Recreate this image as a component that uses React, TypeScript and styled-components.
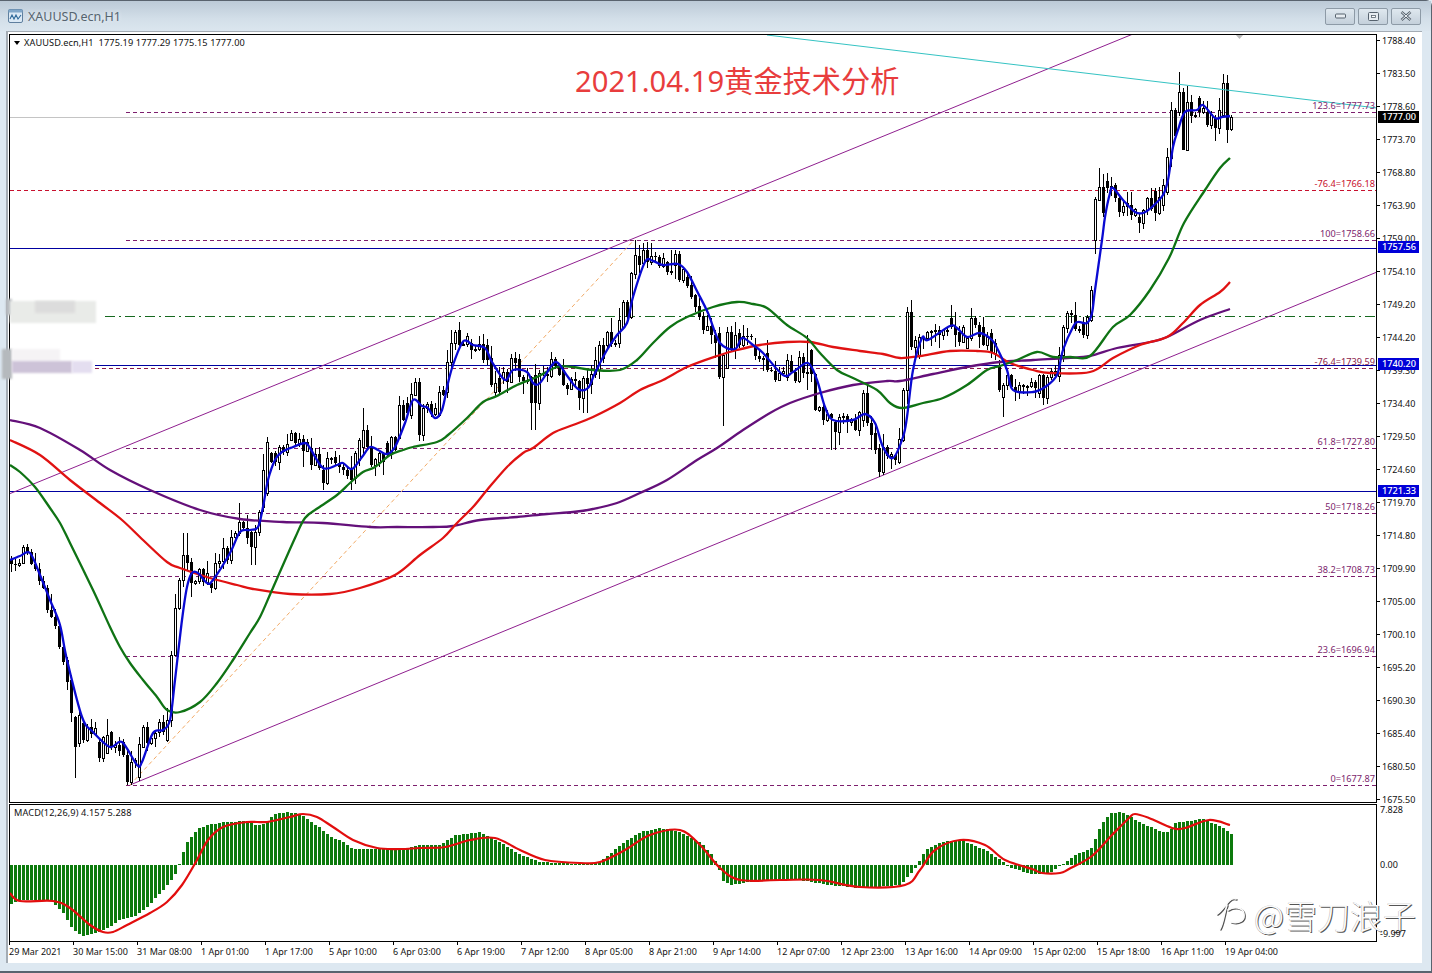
import React from "react";
import styled, { createGlobalStyle } from "styled-components";

type Pt = [number, number];

const BLUE: Pt[] = [[10,560],[20,556],[30,553],[40,575],[50,600],[60,625],[67,660],[82,717],[93,732],[110,747],[122,742],[137,765],[142,762],[153,733],[163,730],[170,720],[175,680],[182,620],[187,587],[192,573],[198,573],[207,583],[213,580],[230,553],[240,532],[250,530],[258,527],[263,507],[268,480],[275,460],[282,452],[293,447],[305,443],[310,448],[323,468],[337,465],[343,463],[352,469],[362,457],[370,447],[378,450],[387,454],[395,447],[405,423],[413,400],[422,406],[428,408],[435,418],[442,410],[448,383],[453,365],[462,343],[467,341],[473,345],[485,348],[492,362],[505,380],[513,370],[527,372],[533,383],[540,383],[552,365],[558,363],[568,377],[578,389],[588,388],[595,373],[607,350],[617,335],[627,323],[633,297],[645,262],[653,261],[663,265],[678,264],[687,272],[698,293],[708,313],[720,343],[735,349],[742,338],[753,345],[763,353],[783,375],[793,372],[808,363],[817,380],[825,407],[833,420],[853,420],[865,414],[875,423],[883,447],[893,458],[903,437],[907,417],[913,370],[922,338],[928,340],[950,326],[957,328],[967,337],[980,333],[992,340],[998,350],[1007,370],[1013,390],[1033,392],[1045,387],[1057,375],[1063,350],[1073,327],[1078,322],[1087,323],[1092,313],[1095,290],[1102,240],[1105,217],[1110,193],[1113,188],[1123,200],[1135,212],[1143,213],[1152,207],[1163,195],[1168,180],[1173,147],[1178,130],[1185,112],[1197,110],[1203,105],[1215,118],[1222,117],[1230,116]];
const GREEN: Pt[] = [[10,465],[20,472],[35,487],[50,508],[60,523],[70,543],[93,590],[110,627],[120,647],[130,663],[143,680],[157,697],[167,710],[180,712],[200,702],[217,683],[233,660],[250,633],[260,617],[272,590],[295,538],[305,518],[318,508],[337,495],[350,483],[363,472],[375,467],[390,455],[403,450],[413,447],[437,442],[448,435],[467,418],[483,402],[497,396],[517,385],[537,377],[557,367],[573,367],[593,370],[620,370],[637,360],[653,343],[670,327],[687,317],[713,307],[737,302],[753,304],[767,308],[787,325],[807,338],[820,353],[837,370],[853,378],[877,390],[890,403],[902,408],[923,403],[943,398],[967,385],[987,370],[1000,366],[1017,360],[1037,352],[1053,357],[1070,357],[1090,356],[1113,327],[1130,315],[1150,290],[1169,258],[1184,223],[1205,190],[1220,168],[1230,158]];
const RED: Pt[] = [[10,440],[40,455],[70,480],[100,503],[122,520],[143,540],[167,562],[180,568],[210,578],[237,585],[253,589],[290,594],[330,594],[360,588],[395,575],[420,555],[443,538],[457,523],[473,507],[487,490],[507,467],[523,453],[533,448],[553,433],[573,425],[593,417],[620,403],[640,390],[663,380],[687,367],[717,356],[737,350],[760,345],[787,342],[810,342],[833,347],[860,351],[883,354],[900,358],[920,356],[950,351],[977,351],[993,353],[1010,363],[1033,370],[1050,373],[1090,372],[1113,358],[1140,345],[1167,337],[1183,323],[1200,305],[1220,292],[1230,282]];
const PURPLE: Pt[] = [[10,420],[40,428],[80,450],[110,470],[150,490],[200,510],[240,519],[283,522],[323,523],[370,527],[397,527],[433,527],[453,526],[480,520],[517,517],[547,514],[573,512],[593,509],[617,503],[640,493],[667,480],[697,460],[717,448],[743,430],[770,413],[790,403],[820,393],[853,385],[887,381],[900,381],[933,374],[967,367],[1000,362],[1033,360],[1067,358],[1090,356],[1117,348],[1150,342],[1167,337],[1200,320],[1230,309]];
const HIST: Pt[] = [[10,904],[20,900],[50,900],[63,913],[73,930],[82,936],[97,933],[110,927],[118,920],[133,917],[147,907],[160,893],[173,878],[178,867],[182,854],[187,842],[197,829],[207,825],[223,822],[247,821],[257,826],[267,822],[273,814],[287,812],[300,814],[310,821],[320,828],[330,837],[343,842],[353,849],[400,849],[420,845],[440,845],[455,835],[480,832],[500,842],[520,855],[540,862],[580,864],[600,862],[620,845],[640,832],[660,828],[680,832],[700,842],[712,855],[718,866],[722,880],[730,885],[760,880],[800,880],[830,885],[860,888],[900,885],[915,868],[925,850],[940,842],[960,840],[985,850],[1000,860],[1010,868],[1032,874],[1049,873],[1059,866],[1065,863],[1074,855],[1092,848],[1097,833],[1102,823],[1110,813],[1122,812],[1132,818],[1145,825],[1162,832],[1169,832],[1175,823],[1189,821],[1202,818],[1212,823],[1224,828],[1230,834]];
const SIGNAL: Pt[] = [[10,893],[20,901],[53,901],[70,908],[90,925],[103,932],[113,932],[127,925],[150,913],[167,902],[182,885],[197,860],[208,840],[223,827],[247,822],[267,822],[290,817],[303,814],[317,817],[333,827],[353,840],[377,848],[400,849],[420,848],[445,847],[470,840],[495,838],[520,850],[545,860],[580,863],[600,862],[625,850],[650,835],[680,830],[700,845],[720,868],[740,880],[780,880],[820,880],[860,887],[905,885],[920,870],[935,850],[960,840],[985,845],[1005,860],[1032,869],[1042,873],[1060,873],[1069,869],[1092,856],[1112,835],[1129,818],[1135,814],[1149,818],[1172,828],[1185,828],[1209,820],[1230,825]];

const HIGHS: Record<number, number> = {185:533,240:503,266:437,290:430,362:408,417:378,451:330,515:352,612:318,634:240,673:250,735:322,808:335,862:390,908:307,950:305,972:308,1072:310,1100:168,1178:72,1224:74};
const LOWS: Record<number, number> = {74:778,130:785,253:565,322:490,352:490,533:430,585:413,722:426,833:450,884:475,1003:417,1043:405,1140:233,1185:150,1228:143};

// notable bodies read from the reference: x, top, bottom, 1 = white / 0 = black
const BODIES: [number, number, number, number][] = [
  [63,647,662,0],[66,660,682,0],[70,680,713,0],[75,717,747,0],[78,715,743,1],[83,723,740,0],[98,742,758,0],[107,735,753,1],[111,732,747,0],[122,742,755,0],[127,755,782,0],[138,744,777,1],[142,727,747,1],[147,727,743,0],[158,722,732,1],[162,722,732,0],[167,720,740,1],[171,655,720,1],[175,608,655,1],[178,580,608,1],[182,555,580,1],[187,555,563,0],[191,562,583,0],[210,583,588,0],[214,563,588,1],[227,548,560,0],[231,537,560,1],[238,522,533,1],[250,532,547,0],
  [263,470,507,1],[266,442,493,1],[273,453,462,0],[278,447,462,1],[291,433,440,1],[310,448,465,0],[323,470,483,0],[327,458,483,1],[334,457,463,0],[351,468,480,0],[355,453,478,1],[358,440,460,1],[362,430,447,1],[367,430,447,0],[371,448,465,0],[378,453,462,1],[386,443,455,0],[390,437,453,1],[394,437,450,0],[398,405,438,1],[407,403,413,0],[410,394,415,1],[414,382,395,1],[418,382,435,0],[422,408,435,1],[438,392,415,1],[442,390,395,0],[446,362,392,1],[450,343,362,1],[454,332,343,1],[458,330,345,0],[470,343,350,0],[486,345,360,0],[490,358,385,0],[494,383,392,1],[498,378,392,0],[502,372,378,1],[506,372,382,0],[510,358,382,1],[518,359,377,0],[531,377,403,0],[535,375,403,0],[562,370,385,0],[598,345,370,1],[607,332,345,1],
  [623,302,327,1],[627,302,317,0],[631,273,317,1],[634,255,274,1],[638,256,265,0],[642,250,263,1],[646,250,262,0],[666,262,272,0],[674,254,265,1],[678,254,280,0],[686,277,286,0],[690,285,297,0],[694,295,307,0],[698,306,317,0],[702,316,330,0],[718,333,377,0],[722,355,377,1],[727,332,368,1],[738,333,345,0],[754,345,356,0],[767,353,370,0],[787,360,377,1],[791,361,372,0],[794,372,381,0],[798,357,381,1],[810,350,374,0],[814,374,410,0],[822,407,420,0],[834,422,432,0],[838,417,432,1],[854,420,430,0],[858,412,430,1],[862,393,420,1],[866,393,423,0],[870,423,435,0],[874,433,450,0],[878,448,472,0],[882,447,472,1],[894,455,460,0],[898,439,462,1],[902,390,440,1],[906,312,390,1],[910,312,347,0],[918,337,355,1],
  [950,318,327,0],[958,332,342,0],[966,338,348,1],[970,318,338,1],[982,327,345,0],[990,333,353,0],[998,367,390,0],[1002,385,397,1],[1038,375,393,1],[1042,375,398,0],[1047,377,398,1],[1062,327,355,1],[1067,313,328,1],[1083,322,335,0],[1087,317,335,1],[1091,290,320,1],
  [1094,199,240,1],[1098,187,200,1],[1106,181,188,0],[1114,185,198,0],[1118,198,212,0],[1131,205,215,0],[1138,217,223,0],[1142,210,223,1],[1146,198,210,1],[1154,191,213,0],[1158,197,213,1],[1162,185,205,1],[1166,157,192,1],[1170,110,158,1],[1178,92,112,1],[1182,92,150,0],[1186,102,150,1],[1198,98,112,0],[1207,112,125,0],[1214,118,128,0],[1218,110,128,1],[1222,83,115,1],[1226,83,130,0],[1230,117,129,1],
];

const interp = (pts: Pt[], x: number) => {
  if (x <= pts[0][0]) return pts[0][1];
  for (let i = 1; i < pts.length; i++) {
    if (x <= pts[i][0]) {
      const [a, b] = pts[i - 1];
      const [c, d] = pts[i];
      return b + ((d - b) * (x - a)) / (c - a);
    }
  }
  return pts[pts.length - 1][1];
};

const rng = (seed: number) => () => {
  seed = (seed + 0x6d2b79f5) | 0;
  let t = Math.imul(seed ^ (seed >>> 15), 1 | seed);
  t = (t + Math.imul(t ^ (t >>> 7), 61 | t)) ^ t;
  return ((t ^ (t >>> 14)) >>> 0) / 4294967296;
};

type Candle = { x: number; hi: number; lo: number; top: number; h: number; bull: boolean };

const buildCandles = (): Candle[] => {
  const rand = rng(2021);
  const xs: number[] = [];
  for (let x = 11; x <= 1231; x += 4) xs.push(x);
  let prev = interp(BLUE, 11);
  return xs.map((x) => {
    const close = Math.round(interp(BLUE, x + 4) + (rand() - 0.5) * 20);
    const open = Math.round(prev);
    prev = close;
    let top = Math.min(open, close);
    let bottom = Math.max(open, close);
    let bull = close < open;
    const over = BODIES.find((b) => Math.abs(b[0] - x) <= 2);
    if (over) {
      top = over[1];
      bottom = over[2];
      bull = over[3] === 1;
      prev = bull ? top : bottom;
    }
    let hi = top - Math.round(rand() * rand() * 16 + 1);
    let lo = bottom + Math.round(rand() * rand() * 16 + 1);
    for (const k in HIGHS) if (Math.abs(+k - x) <= 2) hi = Math.min(HIGHS[k], top);
    for (const k in LOWS) if (Math.abs(+k - x) <= 2) lo = Math.max(LOWS[k], bottom);
    return { x, hi, lo, top, h: Math.max(bottom - top, 1), bull };
  });
};

const CANDLES = buildCandles();

// Catmull-Rom curve through the sampled points, to keep the averages smooth
const smooth = (p: Pt[]) => {
  let d = `M${p[0][0]} ${p[0][1]}`;
  for (let i = 0; i < p.length - 1; i++) {
    const a = p[Math.max(i - 1, 0)];
    const b = p[i];
    const c = p[i + 1];
    const e = p[Math.min(i + 2, p.length - 1)];
    const c1x = b[0] + (c[0] - a[0]) / 6;
    const c1y = b[1] + (c[1] - a[1]) / 6;
    const c2x = c[0] - (e[0] - b[0]) / 6;
    const c2y = c[1] - (e[1] - b[1]) / 6;
    d += `C${c1x.toFixed(1)} ${c1y.toFixed(1)} ${c2x.toFixed(1)} ${c2y.toFixed(1)} ${c[0]} ${c[1]}`;
  }
  return d;
};

const PRICES = ["1788.40","1783.50","1778.60","1773.70","1768.80","1763.90","1759.00","1754.10","1749.20","1744.20","1739.30","1734.40","1729.50","1724.60","1719.70","1714.80","1709.90","1705.00","1700.10","1695.20","1690.30","1685.40","1680.50","1675.50"];
const TIMES = ["29 Mar 2021","30 Mar 15:00","31 Mar 08:00","1 Apr 01:00","1 Apr 17:00","5 Apr 10:00","6 Apr 03:00","6 Apr 19:00","7 Apr 12:00","8 Apr 05:00","8 Apr 21:00","9 Apr 14:00","12 Apr 07:00","12 Apr 23:00","13 Apr 16:00","14 Apr 09:00","15 Apr 02:00","15 Apr 18:00","16 Apr 11:00","19 Apr 04:00"];

const FIBO = [
  { y: 112, x: 126, c: "#7d1f6e", label: "123.6=1777.73" },
  { y: 190, x: 10, c: "#c8102e", label: "-76.4=1766.18" },
  { y: 240, x: 126, c: "#7d1f6e", label: "100=1758.66" },
  { y: 368, x: 95, c: "#8b1a4a", label: "-76.4=1739.59" },
  { y: 448, x: 126, c: "#7d1f6e", label: "61.8=1727.80" },
  { y: 513, x: 126, c: "#7d1f6e", label: "50=1718.26" },
  { y: 576, x: 126, c: "#7d1f6e", label: "38.2=1708.73" },
  { y: 656, x: 126, c: "#7d1f6e", label: "23.6=1696.94" },
  { y: 785, x: 126, c: "#7d1f6e", label: "0=1677.87" },
];

const TAGS = [
  { y: 117, text: "1777.00", bg: "#000" },
  { y: 247, text: "1757.56", bg: "#0000d8" },
  { y: 364, text: "1740.20", bg: "#0000d8" },
  { y: 491, text: "1721.33", bg: "#0000d8" },
];

const SMUDGES = [
  { l: 6, t: 298, w: 6, h: 16, c: "#b8bcc0" },
  { l: 10, t: 300, w: 86, h: 22, c: "#e9ebe8" },
  { l: 35, t: 300, w: 40, h: 12, c: "#dcdcdc" },
  { l: 2, t: 348, w: 10, h: 30, c: "#b5b9bd" },
  { l: 12, t: 348, w: 48, h: 12, c: "#f5f3f5" },
  { l: 12, t: 360, w: 60, h: 12, c: "#cdc3d8" },
  { l: 72, t: 360, w: 20, h: 12, c: "#e4def0" },
];

const Global = createGlobalStyle`
  html, body { margin: 0; padding: 0; background: #dfe9f1; }
  body { width: 1432px; height: 973px; overflow: hidden; }
`;

const Window = styled.div`
  position: relative;
  width: 1432px;
  height: 973px;
  box-sizing: border-box;
  display: flex;
  flex-direction: column;
  background: #dde8f1;
  border: 1px solid #59636e;
  border-width: 1px 1px 2px 0;
  border-top-right-radius: 6px;
  font-family: "Noto Sans", "Liberation Sans", sans-serif;
`;

const TitleBar = styled.div`
  height: 30px;
  flex: none;
  display: flex;
  align-items: center;
  gap: 5px;
  padding: 0 10px 0 8px;
  box-sizing: border-box;
  background: linear-gradient(#bccad7, #d3dfe9 60%, #dbe6ef);
`;

const AppIcon = styled.svg`
  width: 15px;
  height: 14px;
  flex: none;
`;

const Caption = styled.span`
  flex: 1;
  font-size: 12.5px;
  color: #56646f;
  text-shadow: 0 0 4px #eef4f8;
`;

const Controls = styled.div`
  display: flex;
  gap: 3px;
`;

const ControlButton = styled.div`
  width: 30px;
  height: 17px;
  box-sizing: border-box;
  border: 1px solid #8d9aa6;
  border-radius: 2px;
  background: linear-gradient(#dfe8ef, #c4d0db);
  display: flex;
  align-items: center;
  justify-content: center;
  svg { display: block; }
`;

const Client = styled.div`
  flex: 1;
  margin: 0 9px 8px 6px;
  border-left: 2px solid #a4acb4;
  border-top: 1px solid #a4acb4;
  background: #fff;
  padding: 2px 0 0 1px;
  min-height: 0;
`;

const ChartGrid = styled.div`
  display: grid;
  grid-template-columns: 1368px 45px;
  grid-template-rows: 769px 139px 19px;
`;

const Pane = styled.div<{ $gap?: number }>`
  position: relative;
  box-sizing: border-box;
  border: 1px solid #000;
  margin-top: ${(p) => p.$gap ?? 0}px;
  overflow: hidden;
  background: #fff;
  svg { position: absolute; left: -1px; top: -1px; display: block; }
`;

const SvgLabel = styled.text<{ $c: string }>`
  font-family: "Noto Sans", "Liberation Sans", sans-serif;
  font-size: 9.2px;
  fill: ${(p) => p.$c};
`;

const LegendRow = styled.div`
  position: absolute;
  left: 4px;
  top: 2px;
  display: flex;
  align-items: center;
  gap: 4px;
  font-size: 9.2px;
  letter-spacing: 0.1px;
  line-height: 12px;
  color: #111;
  white-space: pre;
`;

const LegendArrow = styled.i`
  width: 0;
  height: 0;
  border-left: 3.5px solid transparent;
  border-right: 3.5px solid transparent;
  border-top: 4px solid #000;
`;

const Headline = styled.div`
  position: absolute;
  left: 565px;
  top: 27px;
  font-family: "Noto Sans", "Noto Sans CJK SC", sans-serif;
  font-size: 29.2px;
  line-height: 38px;
  color: #e83d3d;
  white-space: nowrap;
`;

const AxisCol = styled.div`
  position: relative;
`;

const PriceStack = styled.div`
  display: flex;
  flex-direction: column;
  justify-content: space-between;
  height: calc(100% + 3px);
`;

const PriceRow = styled.div`
  height: 13px;
  display: flex;
  align-items: center;
  gap: 2px;
  font-size: 9px;
  line-height: 13px;
  color: #111;
  &::before {
    content: "";
    width: 3px;
    height: 1px;
    background: #000;
  }
`;

const PriceTag = styled.div<{ $y: number; $bg: string }>`
  position: absolute;
  left: 1px;
  top: ${(p) => p.$y - 34 - 6}px;
  width: 41px;
  height: 12px;
  padding-left: 4px;
  box-sizing: border-box;
  background: ${(p) => p.$bg};
  color: #fff;
  font-size: 9.2px;
  line-height: 12px;
  font-weight: 500;
`;

const MacdTick = styled.div<{ $y: number }>`
  position: absolute;
  left: 3px;
  top: ${(p) => p.$y - 804 - 6}px;
  font-size: 9px;
  line-height: 12px;
  color: #111;
  z-index: 2;
`;

const TimeAxis = styled.div`
  display: flex;
  height: 19px;
`;

const TimeCell = styled.div`
  flex: none;
  width: 64px;
  position: relative;
  font-size: 9px;
  line-height: 12px;
  color: #111;
  white-space: nowrap;
  padding-top: 4px;
  box-sizing: border-box;
  &::before {
    content: "";
    position: absolute;
    left: 0;
    top: 0;
    width: 1px;
    height: 3px;
    background: #000;
  }
`;

const Smudge = styled.div<{ $l: number; $t: number; $w: number; $h: number; $c: string }>`
  position: absolute;
  left: ${(p) => p.$l}px;
  top: ${(p) => p.$t}px;
  width: ${(p) => p.$w}px;
  height: ${(p) => p.$h}px;
  background: ${(p) => p.$c};
  filter: blur(1px);
`;

const Watermark = styled.div`
  position: absolute;
  right: 15px;
  top: 893px;
  display: flex;
  align-items: center;
  gap: 8px;
  font-family: "Noto Sans CJK SC", sans-serif;
  font-weight: 300;
  font-size: 33px;
  line-height: 42px;
  color: #fbfbfb;
  text-shadow: 1px 1px 0 #555, -0.5px -0.5px 0 #bbb;
  white-space: nowrap;
  svg { filter: drop-shadow(1px 1px 0 #555); }
`;

export default function App() {
  const wicks = CANDLES.map((c) => `M${c.x + 0.5} ${c.hi}V${c.lo}`).join("");
  const blacks = CANDLES.filter((c) => !c.bull);
  const whites = CANDLES.filter((c) => c.bull);
  return (
    <Window>
      <Global />
      <TitleBar>
        <AppIcon viewBox="0 0 15 14">
          <rect x="0.5" y="0.5" width="14" height="13" rx="1.5" fill="#dbe9f5" stroke="#5f7f9e" />
          <rect x="0.5" y="0.5" width="14" height="3" fill="#7fa6c8" />
          <path d="M2 10 L4 6 L6 10 L8 6 L10 10 L13 6" fill="none" stroke="#2f6a9a" strokeWidth="1.1" />
        </AppIcon>
        <Caption>XAUUSD.ecn,H1</Caption>
        <Controls>
          <ControlButton>
            <svg width="11" height="6" viewBox="0 0 11 6"><rect x="0.5" y="1" width="10" height="4" rx="1" fill="#e6ecf1" stroke="#56626e" /></svg>
          </ControlButton>
          <ControlButton>
            <svg width="11" height="9" viewBox="0 0 11 9"><rect x="0.5" y="0.5" width="10" height="8" rx="1" fill="#e6ecf1" stroke="#56626e" /><rect x="3.5" y="3.5" width="4" height="2" fill="#fff" stroke="#56626e" strokeWidth="0.8" /></svg>
          </ControlButton>
          <ControlButton>
            <svg width="12" height="10" viewBox="0 0 12 10"><path d="M1.5 1 L10.5 9 M10.5 1 L1.5 9" stroke="#56626e" strokeWidth="2.6" /><path d="M1.5 1 L10.5 9 M10.5 1 L1.5 9" stroke="#eef2f5" strokeWidth="1" /></svg>
          </ControlButton>
        </Controls>
      </TitleBar>
      <Client>
        <ChartGrid>
          <Pane>
            <svg width="1368" height="769" viewBox="9 34 1368 769">
              <polygon points="1235,34 1244,34 1239.5,39" fill="#bbb" />
              <g strokeWidth="1" fill="none">
                <line x1="10" y1="117.5" x2="1377" y2="117.5" stroke="#c4c4c4" />
                {FIBO.map((f) => (
                  <line key={f.y} x1={f.x} y1={f.y + 0.5} x2="1377" y2={f.y + 0.5} stroke={f.c} strokeDasharray="4 3" />
                ))}
                <line x1="105" y1="316.5" x2="1377" y2="316.5" stroke="#16691f" strokeDasharray="10 4 2 4" />
                <line x1="10" y1="248.5" x2="1377" y2="248.5" stroke="#0000a0" />
                <line x1="95" y1="365.5" x2="1377" y2="365.5" stroke="#0000a0" />
                <line x1="10" y1="491.5" x2="1377" y2="491.5" stroke="#0000a0" />
                <line x1="9" y1="494" x2="1133" y2="34" stroke="#8f1f8f" />
                <line x1="130" y1="785" x2="1377" y2="272" stroke="#8f1f8f" />
                <line x1="130" y1="785" x2="634" y2="240" stroke="#f2aa66" strokeDasharray="4 3" />
              </g>
              <path d={wicks} stroke="#000" strokeWidth="1" fill="none" shapeRendering="crispEdges" />
              {blacks.map((c) => (
                <rect key={c.x} x={c.x - 1} y={c.top} width="3" height={c.h} fill="#000" shapeRendering="crispEdges" />
              ))}
              {whites.map((c) => (
                <rect key={c.x} x={c.x - 0.5} y={c.top + 0.5} width="2" height={c.h} fill="#fff" stroke="#000" strokeWidth="1" shapeRendering="crispEdges" />
              ))}
              <g fill="none" strokeWidth="2.3" strokeLinejoin="round">
                <path d={smooth(PURPLE)} stroke="#64107a" />
                <path d={smooth(RED)} stroke="#e01212" />
                <path d={smooth(GREEN)} stroke="#0f7314" />
                <path d={smooth(BLUE)} stroke="#0a0ad2" />
              </g>
              <line x1="767" y1="35" x2="1377" y2="108" stroke="#35c3c3" strokeWidth="1" />
              {FIBO.map((f) => (
                <SvgLabel key={f.label + f.y} x="1375" y={f.y - 3} textAnchor="end" $c={f.c}>{f.label}</SvgLabel>
              ))}
            </svg>
            <LegendRow>
              <LegendArrow />
              <span>XAUUSD.ecn,H1  1775.19 1777.29 1775.15 1777.00</span>
            </LegendRow>
            <Headline>2021.04.19黄金技术分析</Headline>
          </Pane>
          <AxisCol>
            <PriceStack>
              {PRICES.map((p) => (
                <PriceRow key={p}>{p}</PriceRow>
              ))}
            </PriceStack>
            {TAGS.map((t) => (
              <PriceTag key={t.text} $y={t.y} $bg={t.bg}>{t.text}</PriceTag>
            ))}
          </AxisCol>
          <Pane $gap={1}>
            <svg width="1368" height="139" viewBox="9 804 1368 139">
              <g shapeRendering="crispEdges" fill="#0c7a0c">
                {CANDLES.map((c) => {
                  const v = Math.round(interp(HIST, c.x));
                  return <rect key={c.x} x={c.x - 1} y={Math.min(v, 865)} width="3" height={Math.max(Math.abs(v - 865), 1)} />;
                })}
              </g>
              <path d={smooth(SIGNAL)} fill="none" stroke="#e20d0d" strokeWidth="2.2" strokeLinejoin="round" />
            </svg>
            <LegendRow>MACD(12,26,9) 4.157 5.288</LegendRow>
          </Pane>
          <AxisCol>
            <MacdTick $y={811}>7.828</MacdTick>
            <MacdTick $y={866}>0.00</MacdTick>
            <MacdTick $y={935}>-9.997</MacdTick>
          </AxisCol>
          <TimeAxis>
            {TIMES.map((t) => (
              <TimeCell key={t}>{t}</TimeCell>
            ))}
          </TimeAxis>
        </ChartGrid>
      </Client>
      {SMUDGES.map((s, i) => (
        <Smudge key={i} $l={s.l} $t={s.t} $w={s.w} $h={s.h} $c={s.c} />
      ))}
      <Watermark>
        <svg width="30" height="36" viewBox="0 0 30 36">
          <path d="M1 17 C6 14 9 8 13 4 C15 2 18 1 20 2 M11 8 C8 16 8 24 4 32 M12 13 C18 9 27 10 28 17 C29 24 22 27 15 25" fill="none" stroke="#fbfbfb" strokeWidth="1.6" strokeLinecap="round" />
        </svg>
        <span>@雪刀浪子</span>
      </Watermark>
    </Window>
  );
}
